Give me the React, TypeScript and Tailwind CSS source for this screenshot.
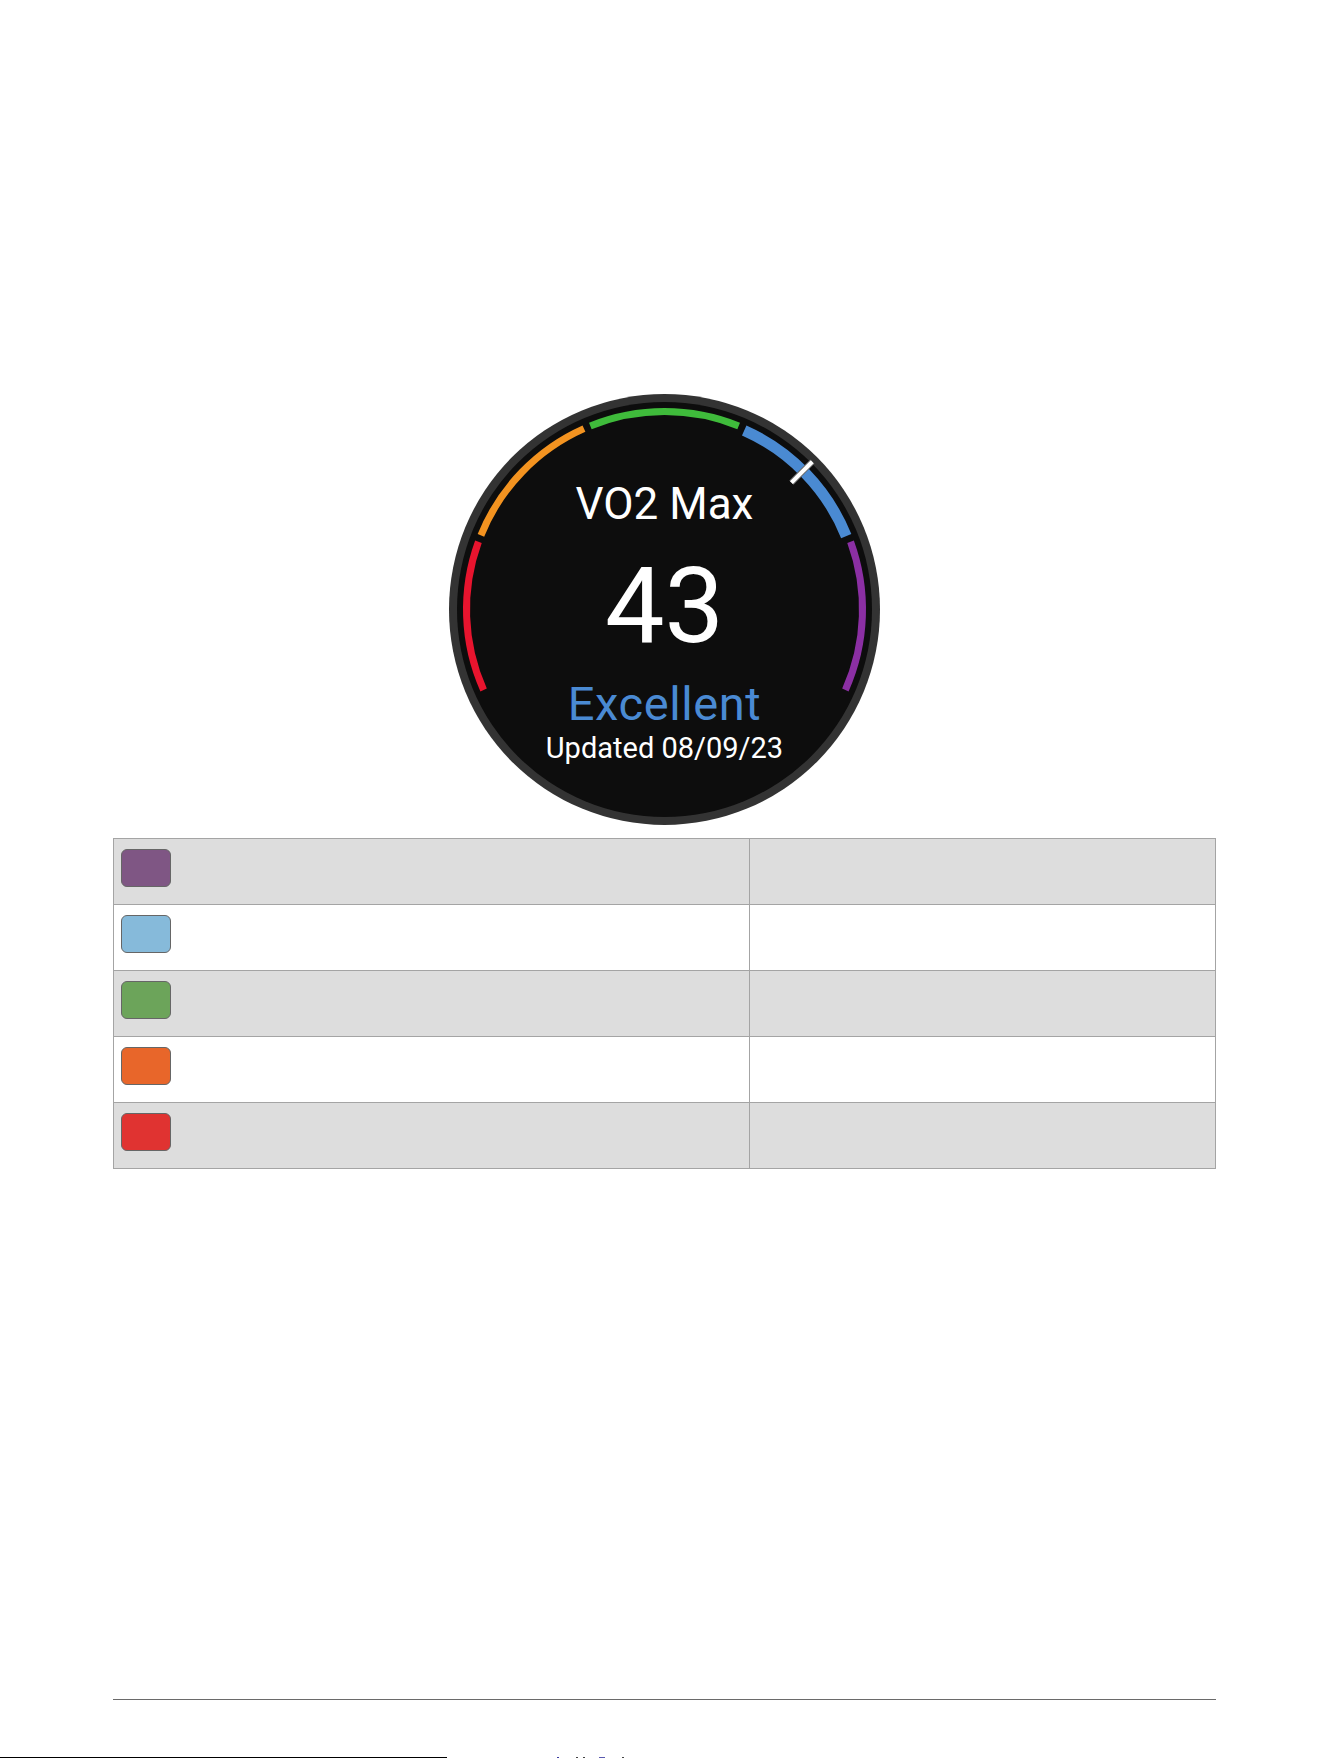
import React from "react";

const CX = 215.5;
const CY = 215.5;

// Point on a circle, angle measured clockwise from 12 o'clock.
function polar(r: number, deg: number) {
  const a = (deg * Math.PI) / 180;
  return { x: CX + r * Math.sin(a), y: CY - r * Math.cos(a) };
}

function arcPath(r: number, from: number, to: number) {
  const s = polar(r, from);
  const e = polar(r, to);
  const large = to - from > 180 ? 1 : 0;
  return `M ${s.x.toFixed(2)} ${s.y.toFixed(2)} A ${r} ${r} 0 ${large} 1 ${e.x.toFixed(2)} ${e.y.toFixed(2)}`;
}

const zones = [
  { from: 246, to: 290, color: "#e8142e", r: 198, w: 7 },
  { from: 292, to: 336, color: "#f39320", r: 198, w: 7 },
  { from: 338, to: 382, color: "#3fbb3b", r: 198, w: 7 },
  { from: 24, to: 68, color: "#4a8ad2", r: 196, w: 11 },
  { from: 70, to: 114, color: "#8b2fa3", r: 198, w: 7 },
];

function Gauge() {
  const t1 = polar(179.5, 45);
  const t2 = polar(209, 45);
  return (
    <svg className="absolute inset-0" width="431" height="431" viewBox="0 0 431 431">
      <circle cx={CX} cy={CY} r={215.5} fill="#333333" />
      <circle cx={CX} cy={CY} r={207.5} fill="#0d0d0d" />
      {zones.map((z, i) => (
        <path key={i} d={arcPath(z.r, z.from, z.to)} fill="none" stroke={z.color} strokeWidth={z.w} />
      ))}
      <line x1={t1.x} y1={t1.y} x2={t2.x} y2={t2.y} stroke="#6b6b6b" strokeWidth={6} />
      <line x1={t1.x} y1={t1.y} x2={t2.x} y2={t2.y} stroke="#ffffff" strokeWidth={4} />
    </svg>
  );
}

const swatches = ["#7f5684", "#86bada", "#6ca45a", "#e8662a", "#e03331"];

export default function App() {
  return (
    <div className="w-[1330px] h-[1758px] bg-white flex flex-col overflow-hidden">
      <div className="w-[1103px] ml-[113px] pt-[394px] flex flex-col">
        <div className="relative w-[431px] h-[431px] mx-auto">
          <Gauge />
          <div
            className="relative flex flex-col items-center pt-[88px] text-white"
            style={{ fontFamily: "Roboto, 'Noto Sans', sans-serif" }}
          >
            <div className="text-[44px] leading-none">VO2 Max</div>
            <div className="mt-[27px] text-[106px] leading-none">43</div>
            <div className="mt-[21px] text-[47px] leading-none tracking-[0.6px] text-[#4a8ad3]">Excellent</div>
            <div className="mt-[7px] text-[29px] leading-none">Updated 08/09/23</div>
          </div>
        </div>

        <div className="mt-[13px] border-t border-l border-[#a4a4a4]">
          {swatches.map((c, i) => (
            <div
              key={c}
              className={`flex h-[66px] border-b border-[#a4a4a4] ${i % 2 === 0 ? "bg-[#dddddd]" : "bg-white"}`}
            >
              <div className="w-[636px] border-r border-[#a4a4a4] pl-[7px] pt-[10px]">
                <div
                  className="w-[50px] h-[38px] rounded-[6px] border border-[#666666]"
                  style={{ backgroundColor: c }}
                />
              </div>
              <div className="flex-1 border-r border-[#a4a4a4]" />
            </div>
          ))}
        </div>

        <div className="mt-[530px] h-px bg-[#6a6a6a]" />
      </div>

      <div className="mt-[57px] flex h-px items-start">
        <div className="w-[447px] h-px bg-black" />
        <div className="ml-[110px] w-[2px] h-px bg-[#3a3aa0]" />
        <div className="ml-[17px] w-[2px] h-px bg-[#444444]" />
        <div className="ml-[5px] w-[2px] h-px bg-[#444444]" />
        <div className="ml-[14px] w-[6px] h-px bg-[#5a5ab0]" />
        <div className="ml-[17px] w-[2px] h-px bg-[#444444]" />
      </div>
    </div>
  );
}
